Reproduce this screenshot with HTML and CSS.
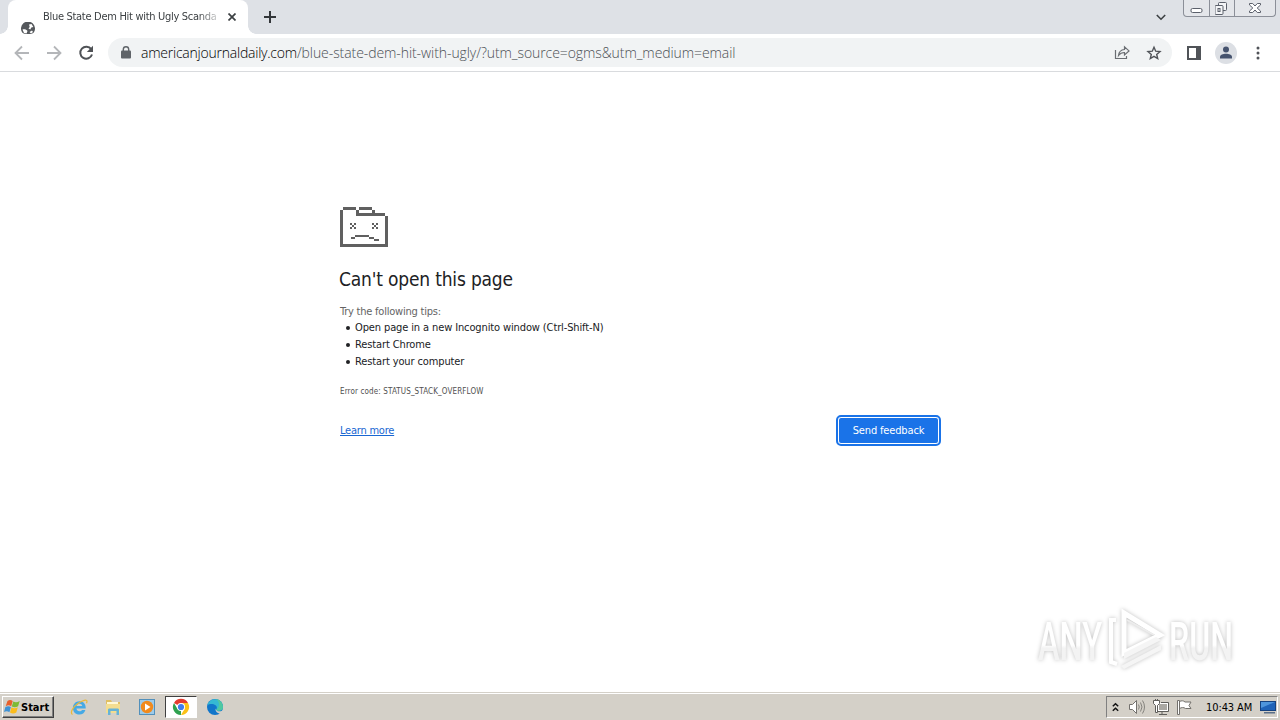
FILE: index.html
```
<!DOCTYPE html>
<html lang="en">
<head>
    <meta charset="utf-8">
    <title>Blue State Dem Hit with Ugly Scandal</title>
    <link rel="stylesheet" href="styles.css">
</head>
<body>
    <div class="tabstrip">
        <div class="tab">
            <svg class="globe" width="14" height="12" viewBox="0 0 14 12"><path d="M1.200 10.500A7 7 0 1 1 12.800 10.500Q10.500 12.500 7 12 3.500 12.500 1.200 10.500z" fill="#55585c"/><path d="M1.500 7.500c2-.6 4 0 5 1.500l-1 2.500-2.500-.5zM8 2.500l2.500-.5 1.800 3-2 .5-1 2-1.800-1 1.200-1.500zM8.500 10l2.500-1.500 1 1.500-2 1.500z" fill="#fff"/></svg>
            <span class="tab-title">Blue State Dem Hit with Ugly Scanda</span>
            <svg class="tab-close" width="8" height="8" viewBox="0 0 8 8"><path d="M.5.5l7 7M7.5.5l-7 7" stroke="#3c4043" stroke-width="1.700"/></svg>
        </div>
        <svg class="new-tab" width="12" height="12" viewBox="0 0 12 12"><path d="M6 0v12M0 6h12" stroke="#33363a" stroke-width="2"/></svg>
        <svg class="tab-search" width="10" height="7" viewBox="0 0 10 7"><path d="M.8 1L5 5.2 9.2 1" fill="none" stroke="#3c4043" stroke-width="1.600"/></svg>
        <div class="window-buttons">
            <span class="win-min"><svg width="14" height="17" viewBox="0 0 14 17"><rect x="1" y="8.500" width="11" height="4" rx="1.500" fill="#fff" stroke="#5b606b"/></svg></span>
            <span class="win-max"><svg width="14" height="17" viewBox="0 0 14 17"><g fill="#f4f5f7" stroke="#5b606b"><rect x="3.500" y="2.500" width="8" height="8" rx="1"/><rect x="0" y="5.500" width="8" height="9" rx="1"/><rect x="3" y="8.500" width="2" height="3"/></g></svg></span>
            <span class="win-close"><svg width="14" height="17" viewBox="0 0 14 17"><path d="M1.500 3.500h3.200l2.300 2.500 2.300-2.500h3.200v1.500l-3.300 3 3.300 3v1.500h-3.200l-2.300-2.500-2.300 2.500h-3.200v-1.500l3.300-3-3.300-3z" fill="#fff" stroke="#5b606b"/></svg></span>
        </div>
    </div>

    <div class="toolbar">
        <svg class="nav-icon" width="16" height="16" viewBox="0 0 16 16"><path d="M15 8H2M8 1.500L1.500 8 8 14.500" fill="none" stroke="#b4b6b9" stroke-width="1.800"/></svg>
        <svg class="nav-icon" width="16" height="16" viewBox="0 0 16 16"><path d="M1 8h13M8 1.500L14.500 8 8 14.500" fill="none" stroke="#b4b6b9" stroke-width="1.800"/></svg>
        <svg class="nav-icon" width="16" height="16" viewBox="0 0 16 16"><path d="M13.200 4.200A6 6 0 1 0 14 9.500" fill="none" stroke="#4f5256" stroke-width="2"/><path d="M15 .8V7H8.800z" fill="#4f5256"/></svg>
        <div class="omnibox">
            <svg class="lock" width="10" height="13" viewBox="0 0 10 13"><rect x="0" y="4.500" width="10" height="8" rx="1" fill="#5f6368"/><path d="M2.300 5V3.500a2.700 2.700 0 0 1 5.400 0V5" fill="none" stroke="#5f6368" stroke-width="1.400"/></svg>
            <span class="url"><b>americanjournaldaily.com</b>/blue-state-dem-hit-with-ugly/?utm_source=ogms&amp;utm_medium=email</span>
            <svg class="share" width="16" height="15" viewBox="0 0 16 15"><g fill="none" stroke="#6a6d72" stroke-width="1.200"><path d="M1.500 5v8.500h11V11"/><path d="M4.500 10.500c.4-3.700 2.400-5.700 6-6V1.800L15 5.900l-4.500 4V7.500c-2.700 0-4.500.9-6 3z"/></g></svg>
            <svg class="star" width="16" height="16" viewBox="0 0 16 16"><path d="M8 2.200l1.700 4 4.300.4-3.300 2.800 1 4.200L8 11.400l-3.700 2.200 1-4.200L2 6.600l4.300-.4z" fill="none" stroke="#505358" stroke-width="1.400"/></svg>
        </div>
        <svg class="panel" width="14" height="14" viewBox="0 0 14 14"><rect x="1" y="1" width="12" height="12" fill="none" stroke="#505358" stroke-width="2"/><path d="M9 1h4v12H9z" fill="#505358"/></svg>
        <svg class="avatar" width="22" height="22" viewBox="0 0 22 22"><circle cx="11" cy="11" r="11" fill="#dcdfe4"/><circle cx="11" cy="7.500" r="3" fill="#46536e"/><path d="M5 16.500v-1.500c0-2 3-3.200 6-3.200s6 1.200 6 3.200v1.500z" fill="#46536e"/></svg>
        <svg class="menu-dots" width="4" height="14" viewBox="0 0 4 14"><g fill="#505358"><circle cx="2" cy="2" r="1.500"/><circle cx="2" cy="7" r="1.500"/><circle cx="2" cy="12" r="1.500"/></g></svg>
    </div>

    <div class="page">
        <div class="sad-tab">
            <svg class="folder" width="48" height="40" viewBox="0 0 48 40" shape-rendering="crispEdges">
                <path d="M3 0h13v3H3zM19 0h13v3H19zM0 3h3v34H0zM16 3h3v3h-3zM32 3h3v3h-3zM16 6h29v3H16zM45 9h3v28h-3zM0 37h48v3H0z" fill="#606060"/>
                <path d="M10 16h2v2h-2zM14 16h2v2h-2zM12 18h2v2h-2zM10 20h2v2h-2zM14 20h2v2h-2zM32 16h2v2h-2zM36 16h2v2h-2zM34 18h2v2h-2zM32 20h2v2h-2zM36 20h2v2h-2zM15 28h14v2H15zM11 30h4v2h-4zM29 30h5v2h-5zM34 32h5v2h-5z" fill="#606060"/>
            </svg>
            <h1>Can't open this page</h1>
            <p class="tips-title">Try the following tips:</p>
            <ul class="tips">
                <li>Open page in a new Incognito window (Ctrl-Shift-N)</li>
                <li>Restart Chrome</li>
                <li>Restart your computer</li>
            </ul>
            <p class="error-code">Error code: STATUS_STACK_OVERFLOW</p>
            <div class="actions">
                <a class="learn-more" href="#">Learn more</a>
                <button class="feedback">Send feedback</button>
            </div>
        </div>

        <svg class="watermark" width="220" height="80" viewBox="0 0 220 80">
            <defs>
                <linearGradient id="fade" x1="0" y1="0" x2="0" y2="1">
                    <stop offset=".55" stop-color="#fff"/>
                    <stop offset=".6" stop-color="#f3f3f3"/>
                </linearGradient>
            </defs>
            <g class="mark">
                <text x="13" y="60" textLength="64" lengthAdjust="spacingAndGlyphs" fill="url(#fade)">ANY</text>
                <text x="144" y="60" textLength="64" lengthAdjust="spacingAndGlyphs" fill="url(#fade)">RUN</text>
                <path d="M99 13v40l36-18z" fill="none" stroke="#fff" stroke-width="5"/>
                <path d="M91 20h-5v42l6 2" fill="none" stroke="#fff" stroke-width="4"/>
                <path d="M99 53l32-16 5 3-37 19v-6M96 66l40-21v5L99 69z" fill="#f5f5f5"/>
                <path d="M102 20l27 15" fill="none" stroke="#ececec" stroke-width="2"/>
            </g>
        </svg>
    </div>

    <div class="taskbar">
        <div class="start">
            <svg width="16" height="16" viewBox="0 0 16 16"><path d="M3.500 2c2-1.500 3.700-1 5.200 0L7.200 7.200c-1.500-1-3.500-1.200-5.500 0z" fill="#e8602c"/><path d="M9.300 2.400c2 1.200 4 1 6.400-.4l-1.600 5.300c-2.200 1.200-4.200 1.200-6.300.2z" fill="#7dba35"/><path d="M1.400 8c2-1.200 4-1 5.500 0l-1.500 5.200C3.900 12.200 2 12 0 13z" fill="#3f92d5"/><path d="M7.500 8.300c2 1.200 4 1.200 6.300 0l-1.500 5.200c-2.200 1.300-4.200 1.200-6.300.1z" fill="#fbbc1c"/></svg>
            <span>Start</span>
        </div>
        <div class="quick-launch">
            <span class="app"><svg width="18" height="18" viewBox="0 0 18 18"><path d="M15.700 10.500H6.500c.2 1.800 1.300 2.800 3 2.800 1.200 0 2-.4 2.600-1.300h3.300c-1 3-3 4.500-6 4.500-4 0-6.500-2.700-6.500-6.500s2.700-6.700 6.500-6.700c4 0 6.600 2.800 6.300 7.200zM6.600 8h5.600c-.2-1.400-1.200-2.200-2.800-2.200-1.500 0-2.500.8-2.800 2.200z" fill="#45a9e5"/><path d="M2.500 16.500c-3-2 1-8 5.500-11S17 1 17 3.200c0 .7-.2 1.300-.5 2" fill="none" stroke="#e9b93a" stroke-width="1.200"/></svg></span>
            <span class="app"><svg width="18" height="18" viewBox="0 0 18 18"><path d="M2 2h5l1 2h8v10H2z" fill="#e0bf62"/><path d="M3 4h11v3H3z" fill="#fff8d5"/><path d="M2 6h14v9H2z" fill="#f3dd90"/><path d="M4 17v-5c0-1 .5-1.500 1.500-1.500h8c1 0 1.500.5 1.500 1.500v5h-2.500v-4h-6v4z" fill="#67b3d6"/></svg></span>
            <span class="app"><svg width="18" height="18" viewBox="0 0 18 18"><rect x="1.500" y="1.500" width="15" height="15" fill="#9dcbea" stroke="#5290bb"/><circle cx="9" cy="9" r="6.200" fill="#f18a1d"/><path d="M7 5.500L12.500 9 7 12.500z" fill="#fff"/></svg></span>
            <span class="app active"><svg width="18" height="18" viewBox="0 0 18 18"><path d="M9 9L2 5a8 8 0 0 1 14 0z" fill="#e33b2e"/><path d="M9 9h0L9 17A8 8 0 0 1 2 5l3.500 6z" fill="#2fa14f"/><path d="M9 5h7a8 8 0 0 1-7 12l3.500-6z" fill="#fbc116"/><circle cx="9" cy="9" r="4" fill="#fff"/><circle cx="9" cy="9" r="3.100" fill="#3f7ded"/></svg></span>
            <span class="app"><svg width="18" height="18" viewBox="0 0 18 18"><circle cx="9" cy="9" r="8" fill="#1176ca"/><path d="M1.300 7A8 8 0 0 1 17 9c0 2.500-2 3.700-4.200 3.700-2 0-3-.7-2.300-1.700C12 8.500 9 6 5.800 6 4 6 2.200 6.500 1.300 7z" fill="#35b9d3"/><path d="M10 1.100A8 8 0 0 1 17 9c0 2.500-2 3.700-4.200 3.700-1.500 0-2.600-.4-2.500-1C14 9 14 4 10 1.100z" fill="#50c8a0"/><path d="M9.500 10.500c.5 2.500 3.500 3.700 6.500 2.200h2v2l-2 1c-4 .5-7-2.200-6.500-5.200z" fill="#d4d0c8"/></svg></span>
        </div>
        <div class="tray">
            <svg width="7" height="10" viewBox="0 0 7 10"><path d="M.8 4.200l2.700-2.500 2.700 2.500M.8 8.700l2.700-2.500 2.700 2.500" fill="none" stroke="#111" stroke-width="1.500"/></svg>
            <svg class="volume" width="17" height="16" viewBox="0 0 17 16"><path d="M1.500 5.500h3l4-4v13l-4-4h-3z" fill="#fff" stroke="#73716d"/><path d="M10.500 5.500q1.500 2.500 0 5M12.500 3.500q3 4.500 0 9M14.500 1.500q4 6.500 0 13" fill="none" stroke="#84827d"/></svg>
            <svg class="network" width="16" height="16" viewBox="0 0 16 16"><rect x="5.500" y="4.500" width="9" height="7" fill="#aaa8a3" stroke="#fff"/><path d="M4.500 6v6.500h11v-9H8M9 13v2M6 15.500h8" fill="none" stroke="#5f5e5b"/><path d="M.5 1.500h6v3l-2 2v7h-2v-7l-2-2zM2.500 0v2M4.500 0v2" fill="#fff" stroke="#5f5e5b"/></svg>
            <svg class="flag" width="16" height="16" viewBox="0 0 16 16"><path d="M1.500 1.500h2v14h-2zM3.500 2.500c2-1 4-1 5.500.5h6l-2 3.500 2 3H9.500c-2-1.500-4-1-6 0z" fill="#fff" stroke="#73716d"/></svg>
            <span class="clock">10:43 AM</span>
            <svg class="desktop" width="16" height="14" viewBox="0 0 16 14"><rect x=".5" y="1.500" width="15" height="9" fill="#1f63b8" stroke="#16427f"/><path d="M1 2h14L1 8z" fill="#4e95dc"/><path d="M4 12h11v1.500H4z" fill="#5b6f88"/></svg>
        </div>
    </div>
</body>
</html>
```
FILE: styles.css
```
* {
    box-sizing: border-box;
}

body {
    display: flex;
    flex-direction: column;
    width: 1280px;
    height: 720px;
    margin: 0;
    overflow: hidden;
    background: #fff;
    font-family: "DejaVu Sans Condensed", "DejaVu Sans", sans-serif;
    font-stretch: condensed;
    font-size: 11px;
    color: #202124;
}

svg {
    display: block;
    flex: none;
}

/* tabs */
.tabstrip {
    display: flex;
    height: 34px;
    padding-left: 8px;
    background: #dee1e6;
}

.tab {
    position: relative;
    display: flex;
    width: 240px;
    height: 34px;
    padding-left: 13px;
    border-radius: 8px 8px 0 0;
    background: #fff;
}

.tab:before,
.tab:after {
    content: "";
    position: absolute;
    bottom: 0;
    width: 8px;
    height: 8px;
}

.tab:before {
    left: -8px;
    background: radial-gradient(circle at 0 0, #dee1e6 7.5px, #fff 8px);
}

.tab:after {
    right: -8px;
    background: radial-gradient(circle at 100% 0, #dee1e6 7.5px, #fff 8px);
}

.globe {
    margin-top: 22px;
}

.tab-title {
    width: 175px;
    margin-left: 8px;
    letter-spacing: -0.3px;
    line-height: 34px;
    white-space: nowrap;
    color: #3c4043;
    -webkit-mask-image: linear-gradient(to right, #000 155px, rgba(0, 0, 0, 0.2) 175px);
    mask-image: linear-gradient(to right, #000 155px, rgba(0, 0, 0, 0.2) 175px);
}

.tab-close {
    margin: 13px 0 0 10px;
}

.new-tab {
    margin: 11px 0 0 16px;
}

.tab-search {
    margin: 14px 17px 0 auto;
}

.window-buttons {
    display: flex;
    width: 93px;
    height: 17px;
    margin-right: 4px;
    border: 1px solid #8b8f98;
    border-top: 0;
    border-radius: 0 0 4px 4px;
    background: #e4e6ea;
}

.window-buttons span {
    display: flex;
    justify-content: center;
    width: 25px;
}

.window-buttons span + span {
    border-left: 1px solid #8b8f98;
}

.window-buttons .win-close {
    width: 41px;
}

/* toolbar */
.toolbar {
    display: flex;
    align-items: center;
    height: 38px;
    padding: 0 20px 0 14px;
    border-bottom: 1px solid #d9dbde;
}

.nav-icon {
    margin-right: 16px;
}

.omnibox {
    display: flex;
    flex: none;
    align-items: center;
    width: 1064px;
    height: 29px;
    margin-left: -2px;
    padding: 0 10px 0 13px;
    border-radius: 15px;
    background: #f1f3f4;
}

.url {
    margin-left: 10px;
    font-family: "Open Sans", sans-serif;
    font-stretch: normal;
    font-weight: 300;
    font-size: 14px;
    letter-spacing: -0.08px;
    color: #4c5054;
    white-space: nowrap;
}

.url b {
    font-weight: 300;
    letter-spacing: -0.23px;
    color: #000;
}

.share {
    margin-left: auto;
}

.star {
    margin-left: 16px;
}

.panel {
    margin-left: 15px;
}

.avatar {
    margin-left: 14px;
}

.menu-dots {
    margin-left: 19px;
}

/* crash page */
.page {
    position: relative;
    flex: 1;
}

.sad-tab {
    width: 601px;
    margin: 135px auto 0 340px;
}

h1 {
    margin: 19px 0 0 -1px;
    font-weight: 400;
    font-size: 19px;
    letter-spacing: -0.18px;
    line-height: 26px;
}

.tips-title {
    margin: 12px 0 0;
    line-height: 16px;
    letter-spacing: -0.22px;
    color: #646464;
}

.tips {
    margin: -1px 0 0;
    padding: 0;
    list-style: none;
}

.tips li {
    display: flex;
    align-items: center;
    height: 17px;
    letter-spacing: -0.12px;
}

.tips li:before {
    content: "";
    width: 4px;
    height: 4px;
    margin: 0 5px 0 6px;
    border-radius: 50%;
    background: #202124;
}

.error-code {
    margin: 16px 0 0;
    font-size: 8px;
    line-height: 12px;
    letter-spacing: 0.12px;
    color: #505050;
}

.actions {
    display: flex;
    align-items: center;
    justify-content: space-between;
    height: 31px;
    margin-top: 17px;
}

.learn-more {
    letter-spacing: -0.22px;
    color: #1967d2;
}

.feedback {
    width: 101px;
    height: 27px;
    margin-right: 2px;
    padding: 0;
    border: 1px solid #fff;
    border-radius: 3px;
    outline: 2px solid #1a73e8;
    background: #1a73e8;
    font: inherit;
    letter-spacing: -0.15px;
    color: #fff;
}

.watermark {
    position: absolute;
    right: 35px;
    bottom: 12px;
    overflow: visible;
}

.mark {
    font-family: Roboto, sans-serif;
    font-stretch: normal;
    font-weight: 500;
    font-size: 53px;
    filter: drop-shadow(0 0 2px rgba(0, 0, 0, 0.25));
}

/* taskbar */
.taskbar {
    display: flex;
    height: 28px;
    padding: 2px 2px 1px;
    border-top: 1px solid #d4d0c8;
    box-shadow: inset 0 1px #fff;
    background: #d4d0c8;
}

.start {
    display: flex;
    align-items: center;
    width: 52px;
    height: 22px;
    margin-top: 1px;
    padding-left: 1px;
    border: 1px solid;
    border-color: #fff #404040 #404040 #fff;
    box-shadow: inset -1px -1px #808080;
    font-weight: 700;
    color: #000;
}

.start span {
    margin-left: 1px;
}

.quick-launch {
    display: flex;
    margin: 1px 0 0 9px;
}

.app {
    display: flex;
    align-items: center;
    justify-content: center;
    width: 32px;
    height: 22px;
    margin-right: 2px;
}

.app.active {
    border: 1px solid;
    border-color: #404040 #fff #fff #404040;
    background: #fff;
}

.tray {
    display: flex;
    align-items: center;
    width: 172px;
    height: 22px;
    margin: 1px 0 0 auto;
    padding-left: 5px;
    border: 1px solid;
    border-color: #808080 #fff #fff #808080;
    color: #000;
}

.volume {
    margin-left: 9px;
}

.network {
    margin-left: 8px;
}

.flag {
    margin-left: 7px;
}

.clock {
    width: 47px;
    margin-left: 14px;
    letter-spacing: -0.1px;
    white-space: nowrap;
}

.desktop {
    margin-left: 7px;
}
```
